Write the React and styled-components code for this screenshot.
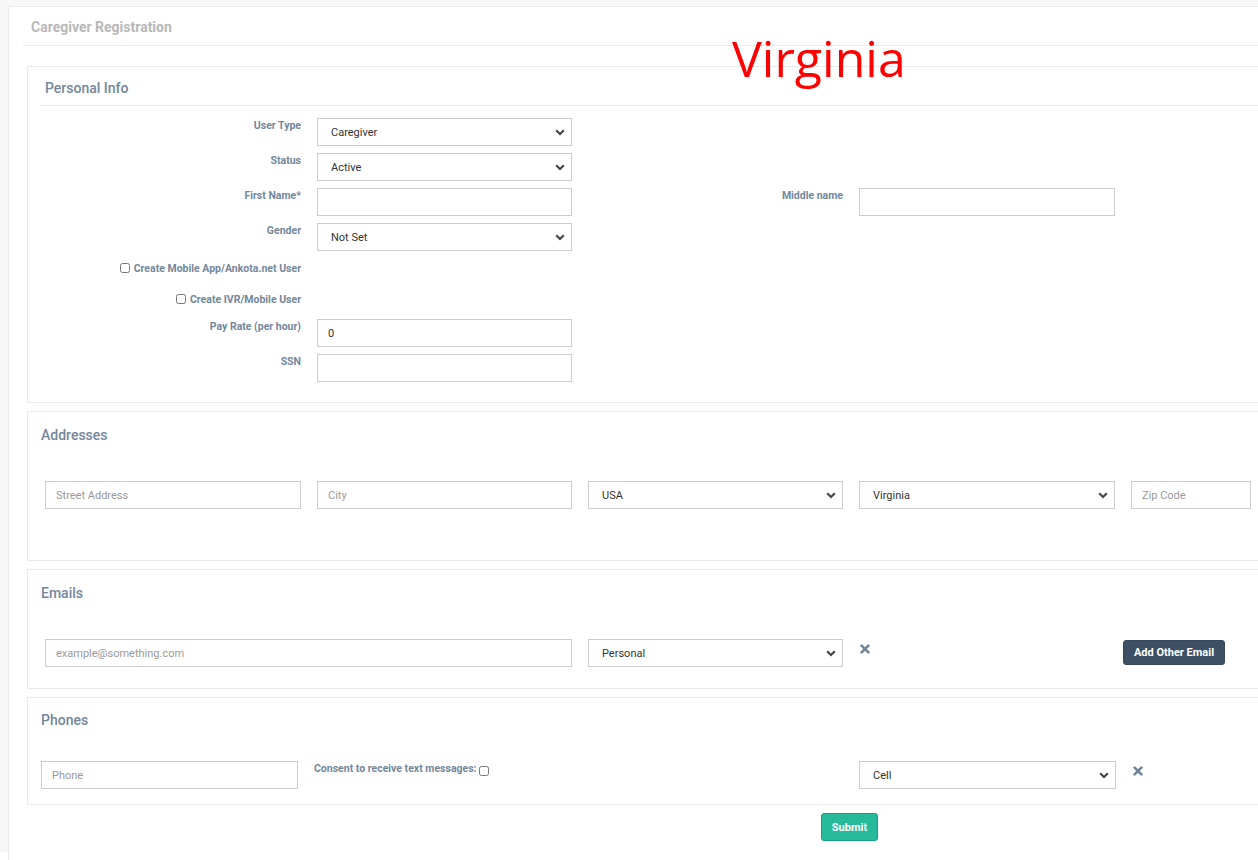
import React from 'react';
import styled, { createGlobalStyle } from 'styled-components';

const GlobalStyle = createGlobalStyle`
  html, body {
    margin: 0;
    padding: 0;
    background: #fff;
    overflow: hidden;
  }
  body {
    font-family: Roboto, "Liberation Sans", Arial, sans-serif;
  }
  * {
    box-sizing: border-box;
  }
`;

const Page = styled.div`
  position: relative;
  height: 860px;
  background: linear-gradient(#f7f7f7, #f7f7f7) no-repeat 0 0 / 100% 852px, #fff;
  padding: 6px 0 0 8px;
  overflow: hidden;
`;

const Annotation = styled.div`
  position: absolute;
  left: 732px;
  top: 33px;
  font: 400 50px/1 "Open Sans", "Noto Sans", sans-serif;
  color: #ff0000;
`;

const Card = styled.div`
  width: 1320px;
  min-height: 860px;
  background: #fff;
  border: 1px solid #e6e9ed;
  border-right: none;
  padding-left: 14px;
`;

const CardHeader = styled.div`
  height: 39px;
  display: flex;
  align-items: center;
  padding: 2px 0 0 8px;
  border-bottom: 1px solid #e6e9ed;
`;

const CardTitle = styled.h2`
  margin: 0;
  font: 700 14px/18px Roboto, sans-serif;
  color: #b8b8b8;
`;

const Body = styled.div`
  padding: 20px 0 0 4px;
`;

const Panel = styled.section`
  border: 1px solid #e6e9ed;
  border-right: none;
  background: #fff;
  padding: 0 0 ${(p) => p.$pb || 0}px 13px;
  margin-bottom: 8px;
`;

const PanelHeading = styled.div`
  height: 39px;
  display: flex;
  align-items: center;
  padding: 3px 0 0 4px;
  border-bottom: 1px solid #e6e9ed;
`;

const PanelTitle = styled.h3`
  margin: 0;
  padding-top: ${(p) => p.$pt || 0}px;
  font: 500 14px/20px Roboto, sans-serif;
  color: #73879c;
`;

const FormStack = styled.div`
  display: flex;
  flex-direction: column;
  gap: 7px;
  padding: 12px 0 20px 4px;
`;

const FormRow = styled.div`
  display: grid;
  grid-template-columns: 256px 255px 255px 256px;
  column-gap: 16px;
  height: ${(p) => p.$h || 28}px;
`;

const FieldLabel = styled.label`
  padding-top: 2px;
  font: 700 10.5px/12px Roboto, sans-serif;
  color: #73879c;
  text-align: right;
`;

const CheckLabel = styled.label`
  display: flex;
  justify-content: flex-end;
  align-items: flex-start;
  padding-top: 5px;
  font: 700 10.5px/12px Roboto, sans-serif;
  color: #73879c;
`;

const ConsentLabel = styled(CheckLabel)`
  justify-content: flex-start;
  padding-top: 2px;
`;

const Check = styled.input.attrs({ type: 'checkbox' })`
  width: 10px;
  height: 10px;
  margin: ${(p) => (p.$after ? '3px 0 0 2px' : '0 4px 0 0')};
`;

const FieldRow = styled.div`
  display: grid;
  grid-template-columns: ${(p) => p.$cols};
  column-gap: 16px;
  align-items: start;
  margin-top: ${(p) => p.$mt || 0}px;
  padding-left: ${(p) => p.$pl || 0}px;
`;

const TextInput = styled.input`
  width: 100%;
  height: 28px;
  border: 1px solid #ccc;
  border-radius: 0;
  padding: 0 10px;
  font: 400 11px Roboto, sans-serif;
  color: #333;
  background: #fff;
  outline: none;

  &::placeholder {
    color: #999;
  }
`;

const SelectWrap = styled.div`
  position: relative;
  height: 28px;
`;

const SelectEl = styled.select`
  appearance: none;
  width: 100%;
  height: 28px;
  border: 1px solid #ccc;
  border-radius: 0;
  background: #fff;
  padding: 0 26px 0 13px;
  font: 400 11px Roboto, sans-serif;
  color: #333;
  outline: none;
`;

const Chevron = styled.svg`
  position: absolute;
  right: 7px;
  top: 11px;
  pointer-events: none;
`;

const RemoveCell = styled.div`
  display: flex;
  padding: ${(p) => p.$pt || 0}px 0 0 1px;
`;

const DarkButton = styled.button`
  width: 102px;
  height: 25px;
  margin-top: 1px;
  padding: 0;
  border: 1px solid #36485b;
  border-radius: 3px;
  background: #3d5064;
  color: #fff;
  font: 700 11px Roboto, sans-serif;
`;

const SubmitButton = styled.button`
  display: block;
  width: 57px;
  height: 28px;
  margin-left: 794px;
  padding: 0;
  border: 1px solid #169f85;
  border-radius: 3px;
  background: #26b99a;
  color: #fff;
  font: 700 11px Roboto, sans-serif;
`;

const Select = ({ value, options }) => (
  <SelectWrap>
    <SelectEl defaultValue={value}>
      {(options || [value]).map((o) => (
        <option key={o}>{o}</option>
      ))}
    </SelectEl>
    <Chevron width="10" height="7" viewBox="0 0 10 7">
      <path d="M1.2 1.3 L5 5.1 L8.8 1.3" fill="none" stroke="#444" strokeWidth="2.1" />
    </Chevron>
  </SelectWrap>
);

const RemoveIcon = () => (
  <svg width="10" height="10" viewBox="0 0 10 10">
    <path d="M1.6 1.6 L8.4 8.4 M8.4 1.6 L1.6 8.4" stroke="#73879c" strokeWidth="2.7" strokeLinecap="round" />
  </svg>
);

export default function App() {
  return (
    <Page>
      <GlobalStyle />
      <Card>
        <CardHeader>
          <CardTitle>Caregiver Registration</CardTitle>
        </CardHeader>
        <Body>
          <Panel>
            <PanelHeading>
              <PanelTitle>Personal Info</PanelTitle>
            </PanelHeading>
            <FormStack>
              <FormRow>
                <FieldLabel>User Type</FieldLabel>
                <Select value="Caregiver" options={['Caregiver', 'Admin']} />
              </FormRow>
              <FormRow>
                <FieldLabel>Status</FieldLabel>
                <Select value="Active" options={['Active', 'Inactive']} />
              </FormRow>
              <FormRow>
                <FieldLabel>First Name*</FieldLabel>
                <TextInput />
                <FieldLabel>Middle name</FieldLabel>
                <TextInput />
              </FormRow>
              <FormRow>
                <FieldLabel>Gender</FieldLabel>
                <Select value="Not Set" options={['Not Set', 'Male', 'Female']} />
              </FormRow>
              <FormRow $h={23.5}>
                <CheckLabel>
                  <Check />
                  Create Mobile App/Ankota.net User
                </CheckLabel>
              </FormRow>
              <FormRow $h={23.5}>
                <CheckLabel>
                  <Check />
                  Create IVR/Mobile User
                </CheckLabel>
              </FormRow>
              <FormRow>
                <FieldLabel>Pay Rate (per hour)</FieldLabel>
                <TextInput defaultValue="0" />
              </FormRow>
              <FormRow>
                <FieldLabel>SSN</FieldLabel>
                <TextInput />
              </FormRow>
            </FormStack>
          </Panel>

          <Panel $pb={51}>
            <PanelTitle $pt={13}>Addresses</PanelTitle>
            <FieldRow $cols="256px 255px 255px 256px 120px" $mt={36} $pl={4}>
              <TextInput placeholder="Street Address" />
              <TextInput placeholder="City" />
              <Select value="USA" options={['USA', 'Canada']} />
              <Select value="Virginia" options={['Virginia', 'Maryland']} />
              <TextInput placeholder="Zip Code" />
            </FieldRow>
          </Panel>

          <Panel $pb={21}>
            <PanelTitle $pt={13}>Emails</PanelTitle>
            <FieldRow $cols="527px 255px 248px 102px" $mt={36} $pl={4}>
              <TextInput placeholder="example@something.com" />
              <Select value="Personal" options={['Personal', 'Work']} />
              <RemoveCell $pt={5}>
                <RemoveIcon />
              </RemoveCell>
              <DarkButton>Add Other Email</DarkButton>
            </FieldRow>
          </Panel>

          <Panel $pb={15}>
            <PanelTitle $pt={12}>Phones</PanelTitle>
            <FieldRow $cols="257px 529px 257px auto" $mt={31}>
              <TextInput placeholder="Phone" />
              <ConsentLabel>
                Consent to receive text messages:
                <Check $after />
              </ConsentLabel>
              <Select value="Cell" options={['Cell', 'Home', 'Work']} />
              <RemoveCell $pt={5}>
                <RemoveIcon />
              </RemoveCell>
            </FieldRow>
          </Panel>

          <SubmitButton>Submit</SubmitButton>
        </Body>
      </Card>
      <Annotation>Virginia</Annotation>
    </Page>
  );
}
